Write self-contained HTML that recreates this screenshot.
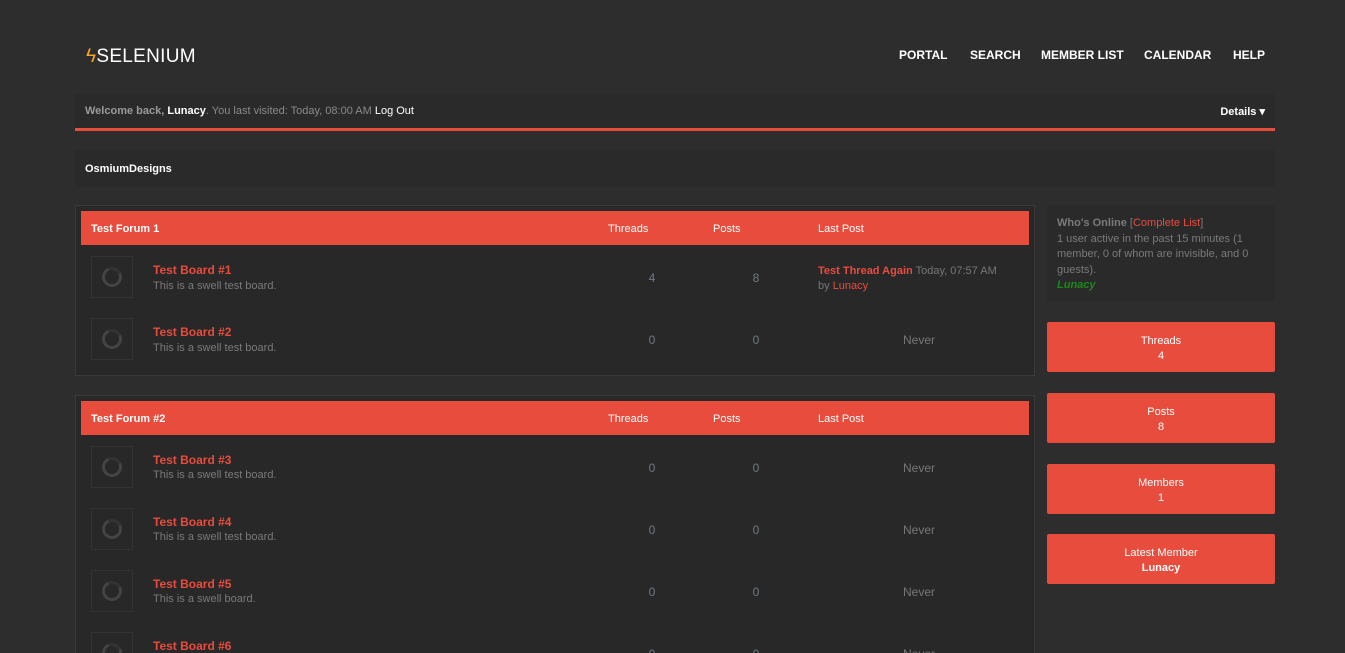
<!DOCTYPE html>
<html><head><meta charset="utf-8"><style>
*{margin:0;padding:0;box-sizing:border-box}
html,body{width:1345px;height:653px;overflow:hidden}
body{background:#2d2d2d;font-family:"Liberation Sans",sans-serif;font-size:12px;color:#8a8a8a;position:relative}
.a{position:absolute}
.logo{left:86px;top:46px;color:#fff;font-size:19px;letter-spacing:0.3px}
.nav{top:48px;color:#fff;font-weight:bold;font-size:12px}
.welcome{left:75px;top:94px;width:1200px;height:37px;border-bottom:3px solid #e84c3d;background:#2a2a2a}
.crumb{left:75px;top:150px;width:1200px;height:37px;background:#2a2a2a;color:#fff;font-weight:bold;padding:13px 10px 0;font-size:11px}
.forum{left:75px;width:960px;border:1px solid #3a3a3a;background:#282828;overflow:hidden}
.head{position:absolute;left:5px;width:948px;height:34px;background:#e84c3d;color:#fff;font-size:11px}
.head span{position:absolute;top:12px}
.icon{position:absolute;left:15px;width:42px;height:42px;border:1px solid #333}
.icon:after{content:"";position:absolute;left:10px;top:10px;width:14px;height:14px;border:3px solid #444;border-top-color:#333;border-radius:50%;transform:rotate(20deg)}
.title{position:absolute;left:77px;color:#e84c3d;font-weight:bold;font-size:12px}
.desc{position:absolute;left:77px;color:#7a7a7a;font-size:11px}
.num{position:absolute;color:#6c7a85;font-size:12px;width:40px;text-align:center}
.never{position:absolute;left:808px;width:70px;text-align:center;color:#777}
.stat{left:1047px;width:228px;height:50px;background:#e84c3d;color:#fff;text-align:center;font-size:11px;padding-top:12px;line-height:15px;border-radius:2px}
</style></head><body>
<div class="a logo"><span style="color:#f5a623">ϟ</span>SELENIUM</div>
<div class="a nav" style="left:899px">PORTAL</div>
<div class="a nav" style="left:970px">SEARCH</div>
<div class="a nav" style="left:1041px">MEMBER LIST</div>
<div class="a nav" style="left:1144px">CALENDAR</div>
<div class="a nav" style="left:1233px">HELP</div>
<div class="a welcome"><div class="a" style="left:10px;top:11px;font-size:11px"><b style="color:#9a9a9a">Welcome back, <span style="color:#fff">Lunacy</span></b>. You last visited: Today, 08:00 AM <span style="color:#fff">Log Out</span></div><div class="a" style="right:10px;top:11px;color:#fff;font-weight:bold;font-size:11px">Details ▾</div></div>
<div class="a crumb">OsmiumDesigns</div>

<div class="a forum" style="top:205px;height:171px">
<div class="head" style="top:5px"><span style="left:10px;font-weight:bold">Test Forum 1</span><span style="left:527px">Threads</span><span style="left:632px">Posts</span><span style="left:737px">Last Post</span></div>
<div class="icon" style="top:50px"></div><div class="title" style="top:57px">Test Board #1</div><div class="desc" style="top:74px">This is a swell test board.</div>
<div class="num" style="left:556px;top:65px">4</div><div class="num" style="left:660px;top:65px">8</div>
<div class="a" style="left:742px;top:58px;font-size:11px;line-height:15px;color:#777"><b style="color:#e84c3d">Test Thread Again</b> Today, 07:57 AM<br>by <span style="color:#e84c3d">Lunacy</span></div>
<div class="icon" style="top:112px"></div><div class="title" style="top:119px">Test Board #2</div><div class="desc" style="top:136px">This is a swell test board.</div>
<div class="num" style="left:556px;top:127px">0</div><div class="num" style="left:660px;top:127px">0</div><div class="never" style="top:127px">Never</div>
</div>

<div class="a forum" style="top:395px;height:258px;border-bottom:none">
<div class="head" style="top:5px"><span style="left:10px;font-weight:bold">Test Forum #2</span><span style="left:527px">Threads</span><span style="left:632px">Posts</span><span style="left:737px">Last Post</span></div>
<div class="icon" style="top:50px"></div><div class="title" style="top:57px">Test Board #3</div><div class="desc" style="top:73px">This is a swell test board.</div>
<div class="num" style="left:556px;top:65px">0</div><div class="num" style="left:660px;top:65px">0</div><div class="never" style="top:65px">Never</div>
<div class="icon" style="top:112px"></div><div class="title" style="top:119px">Test Board #4</div><div class="desc" style="top:135px">This is a swell test board.</div>
<div class="num" style="left:556px;top:127px">0</div><div class="num" style="left:660px;top:127px">0</div><div class="never" style="top:127px">Never</div>
<div class="icon" style="top:174px"></div><div class="title" style="top:181px">Test Board #5</div><div class="desc" style="top:197px">This is a swell board.</div>
<div class="num" style="left:556px;top:189px">0</div><div class="num" style="left:660px;top:189px">0</div><div class="never" style="top:189px">Never</div>
<div class="icon" style="top:236px"></div><div class="title" style="top:243px">Test Board #6</div>
<div class="num" style="left:556px;top:251px">0</div><div class="num" style="left:660px;top:251px">0</div><div class="never" style="top:251px">Never</div>
</div>

<div class="a" style="left:1047px;top:205px;width:228px;height:96px;background:#2a2a2a;padding:11px 10px;font-size:11px;line-height:15.5px;color:#7a7a7a">
<b>Who's Online</b> [<span style="color:#e84c3d">Complete List</span>]<br>1 user active in the past 15 minutes (1 member, 0 of whom are invisible, and 0 guests).<br><b><i style="color:#1a8a1a">Lunacy</i></b></div>
<div class="a stat" style="top:322px">Threads<br>4</div>
<div class="a stat" style="top:393px">Posts<br>8</div>
<div class="a stat" style="top:464px">Members<br>1</div>
<div class="a stat" style="top:534px">Latest Member<br><b>Lunacy</b></div>
</body></html>
